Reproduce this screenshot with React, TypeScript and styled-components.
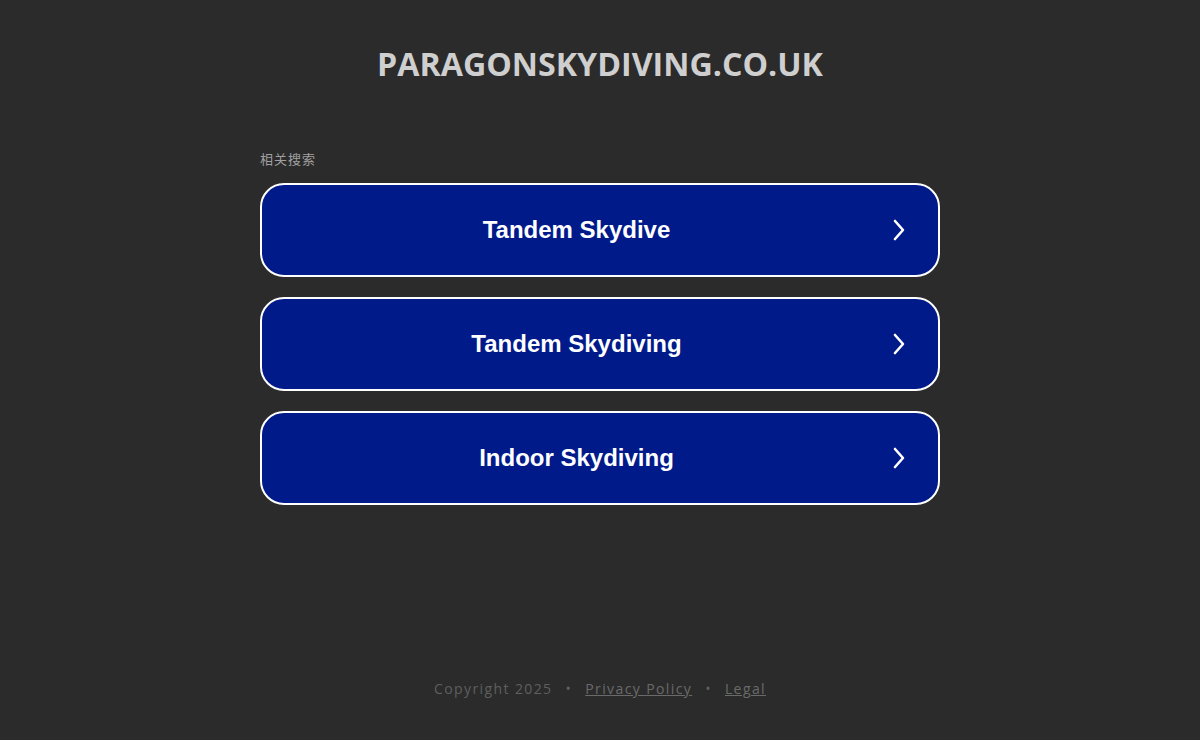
import React from "react";
import styled, { createGlobalStyle } from "styled-components";

const Global = createGlobalStyle`
  html, body { margin: 0; padding: 0; background: #2b2b2b; }
  body { font-family: "Open Sans", "Noto Sans CJK SC", sans-serif; }
`;

const Page = styled.div`
  min-height: 740px;
  display: flex;
  flex-direction: column;
  align-items: center;
  background: #2b2b2b;
`;

const Title = styled.h1`
  margin: 43px 0 0;
  font-family: "Open Sans", sans-serif;
  font-weight: 700;
  font-size: 32.2px;
  line-height: 42px;
  color: #cfcfcf;
`;

const Section = styled.div`
  width: 680px;
  margin-top: 65px;
  display: flex;
  flex-direction: column;
`;

const Label = styled.div`
  font-family: "Noto Sans CJK SC", sans-serif;
  font-size: 13px;
  letter-spacing: 1px;
  line-height: 18px;
  color: #a0a0a0;
  margin-bottom: 15px;
`;

const List = styled.div`
  display: flex;
  flex-direction: column;
  gap: 20px;
`;

const Item = styled.a`
  box-sizing: border-box;
  height: 94px;
  border: 2px solid #ffffff;
  border-radius: 24px;
  background: #011a8a;
  display: flex;
  align-items: center;
  justify-content: center;
  position: relative;
  text-decoration: none;
  color: #ffffff;
  font-family: "Liberation Sans", Arial, sans-serif;
  font-weight: 700;
  font-size: 24px;
`;

const Text = styled.span`
  margin-left: -47px;
`;

const Chevron = styled.svg`
  position: absolute;
  right: 32px;
  top: 50%;
  transform: translateY(-50%);
`;

const Footer = styled.div`
  margin-top: auto;
  margin-bottom: 42px;
  font-family: "Open Sans", sans-serif;
  font-size: 14px;
  letter-spacing: 1.4px;
  color: #5f5f5f;
  display: flex;
  gap: 13px;
  align-items: center;
`;

const FootLink = styled.a`
  color: #6a6a6a;
  text-decoration: underline;
`;

const items = ["Tandem Skydive", "Tandem Skydiving", "Indoor Skydiving"];

export default function App() {
  return (
    <>
      <Global />
      <Page>
        <Title>PARAGONSKYDIVING.CO.UK</Title>
        <Section>
          <Label>相关搜索</Label>
          <List>
            {items.map((t) => (
              <Item key={t} href="#">
                <Text>{t}</Text>
                <Chevron width="14" height="22" viewBox="0 0 14 22">
                  <path d="M3 2 L11 11 L3 20" fill="none" stroke="#fff" strokeWidth="2.6" strokeLinecap="round" strokeLinejoin="round" />
                </Chevron>
              </Item>
            ))}
          </List>
        </Section>
        <Footer>
          <span>Copyright 2025</span>
          <span>•</span>
          <FootLink href="#">Privacy Policy</FootLink>
          <span>•</span>
          <FootLink href="#">Legal</FootLink>
        </Footer>
      </Page>
    </>
  );
}
